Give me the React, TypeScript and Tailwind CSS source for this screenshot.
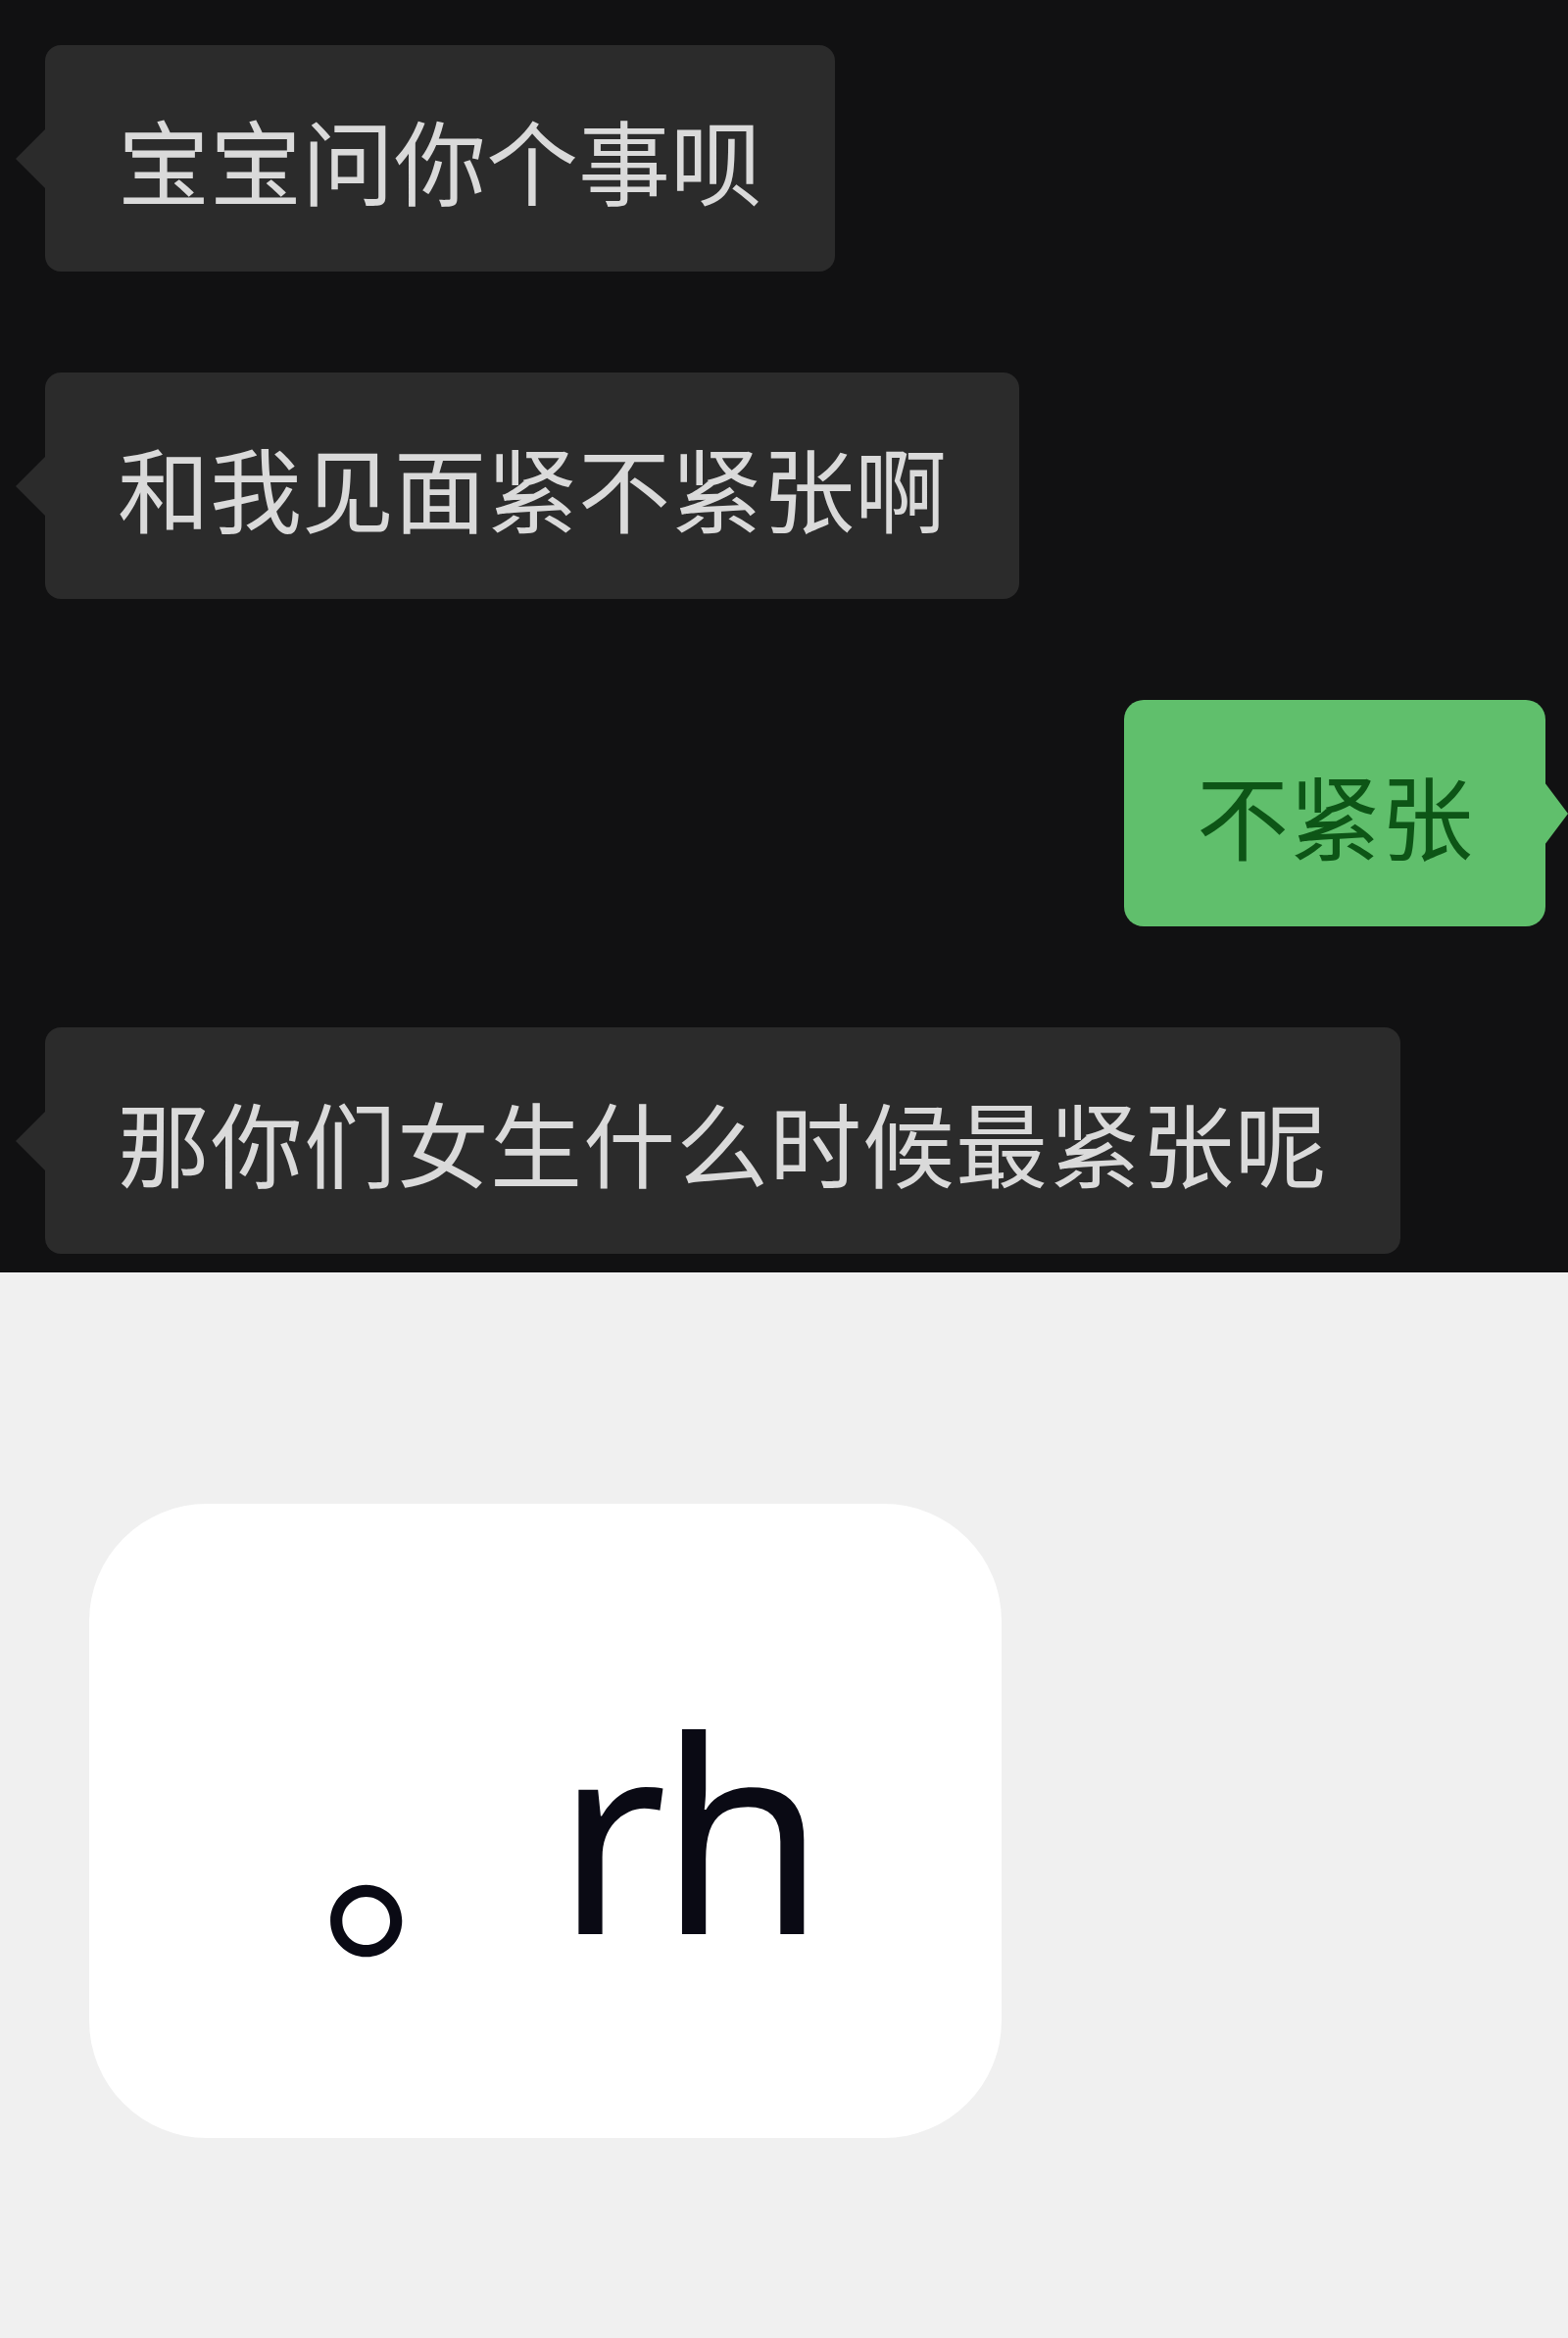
import React from 'react';

type Side = 'left' | 'right';

const cjk = { fontFamily: '"Noto Sans CJK SC", "Noto Sans", sans-serif' };

const Bubble: React.FC<{ text: string; side: Side; wide?: boolean }> = ({ text, side, wide }) => {
  const isRight = side === 'right';
  return (
    <div className={isRight ? 'flex justify-end pr-[23px]' : 'flex justify-start pl-[46px]'}>
      <div
        className={
          isRight
            ? 'relative h-[231px] flex items-center px-[74px] rounded-[20px] bg-[#60bf6c] text-[#0d5516]'
            : 'relative h-[231px] flex items-center px-[74px] rounded-[16px] bg-[#2b2b2b] text-[#dadada]'
        }
      >
        {isRight ? (
          <span className="absolute right-[-23px] top-1/2 -translate-y-1/2 w-0 h-0 border-y-[32px] border-y-transparent border-l-[24px] border-l-[#60bf6c]" />
        ) : (
          <span className="absolute left-[-30px] top-1/2 -translate-y-1/2 w-0 h-0 border-y-[30px] border-y-transparent border-r-[30px] border-r-[#2b2b2b]" />
        )}
        <span style={cjk} className={wide ? 'text-[94px] leading-none tracking-[1px]' : 'text-[94px] leading-none'}>
          {text}
        </span>
      </div>
    </div>
  );
};

export default function App() {
  return (
    <div className="w-[1600px] min-h-[2385px] bg-[#f0f0f0]">
      <div className="bg-[#111112] pt-[46px] pb-[19px] flex flex-col gap-[103px]">
        <Bubble side="left" text="宝宝问你个事呗" />
        <Bubble side="left" text="和我见面紧不紧张啊" />
        <Bubble side="right" text="不紧张" />
        <Bubble side="left" text="那你们女生什么时候最紧张呢" wide />
      </div>

      <div className="pt-[236px] pl-[91px]">
        <div className="w-[931px] h-[647px] bg-white rounded-[120px] flex items-center pl-[236px] pt-[18px]">
          <span
            className="text-[275px] leading-none text-[#0a0a14]"
            style={{ fontFamily: '"Noto Sans", "Noto Sans CJK SC", sans-serif' }}
          >
            <span style={cjk} className="text-[240px] align-[-8px]">。</span>
            <span className="tracking-[-8px]">rh</span>
          </span>
        </div>
      </div>
    </div>
  );
}
